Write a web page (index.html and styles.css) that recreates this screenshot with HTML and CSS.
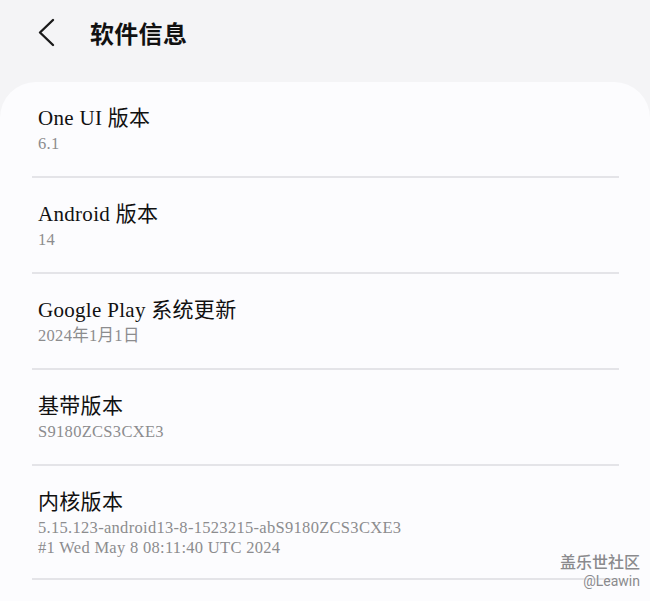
FILE: index.html
```html
<!DOCTYPE html>
<html lang="zh-CN">
<head>
    <meta charset="UTF-8">
    <title>软件信息</title>
    <link rel="stylesheet" href="styles.css">
</head>
<body>
    <div id="wrap">
        <header class="top">
            <button class="back" aria-label="返回">
                <svg width="20" height="30" viewBox="0 0 20 30">
                    <polyline points="16,3 3,15.5 16,28" fill="none" stroke="#1a1a1a" stroke-width="2.4" stroke-linecap="round" stroke-linejoin="round"/>
                </svg>
            </button>
            <h1>软件信息</h1>
        </header>

        <section class="card">
            <div class="row">
                <h2>One UI 版本</h2>
                <p>6.1</p>
            </div>
            <div class="row">
                <h2>Android 版本</h2>
                <p>14</p>
            </div>
            <div class="row">
                <h2>Google Play 系统更新</h2>
                <p>2024年1月1日</p>
            </div>
            <div class="row">
                <h2>基带版本</h2>
                <p>S9180ZCS3CXE3</p>
            </div>
            <div class="row">
                <h2>内核版本</h2>
                <p>5.15.123-android13-8-1523215-abS9180ZCS3CXE3</p>
                <p>#1 Wed May 8 08:11:40 UTC 2024</p>
            </div>
        </section>

        <!-- 水印 -->
        <div class="mark">
            <span class="mark-cn">盖乐世社区</span>
            <span class="mark-en">@Leawin</span>
        </div>
    </div>
</body>
</html>
```

FILE: styles.css
```css
*{
    box-sizing: border-box;
}

body{
    margin: 0;
    background: #f4f4f6;
    font-family: "Liberation Serif", "Noto Sans CJK SC", serif;
    color: #111;
}

#wrap{
    position: relative;
    width: 650px;
    height: 601px;
    overflow: hidden;
}

.top{
    display: flex;
    align-items: center;
    height: 82px;
    padding-left: 37px;
    padding-bottom: 18px;
}

.back{
    display: flex;
    padding: 0;
    border: 0;
    background: none;
}

.top h1{
    margin: 0 0 0 33px;
    font-family: "Noto Sans CJK SC", sans-serif;
    font-size: 24px;
    font-weight: 700;
    letter-spacing: 0.3px;
}

.card{
    background: #fcfcfe;
    border-radius: 36px 36px 0 0;
    padding: 0 31px 0 32px;
    min-height: 519px;
}

.row{
    padding: 23px 6px 22px;
    border-bottom: 2px solid #e4e4e8;
}

.row:last-child{
    padding-bottom: 20px;
}

.row h2{
    margin: 0 0 3px;
    font-size: 21px;
    font-weight: 400;
    line-height: 26px;
    letter-spacing: 0.3px;
}

.row p{
    margin: 0;
    font-size: 16.5px;
    line-height: 20px;
    letter-spacing: 0.3px;
    color: #8c8c8e;
}

.mark{
    position: absolute;
    right: 10px;
    top: 550px;
    display: flex;
    flex-direction: column;
    align-items: flex-end;
    font-family: "Noto Sans CJK SC", "Roboto", sans-serif;
    color: #8a8a8d;
    text-shadow: 0 0 2px #fff;
}

.mark-cn{
    font-size: 16px;
    font-weight: 500;
    line-height: 22px;
}

.mark-en{
    font-family: "Roboto", sans-serif;
    font-size: 14px;
    line-height: 18px;
}
```
